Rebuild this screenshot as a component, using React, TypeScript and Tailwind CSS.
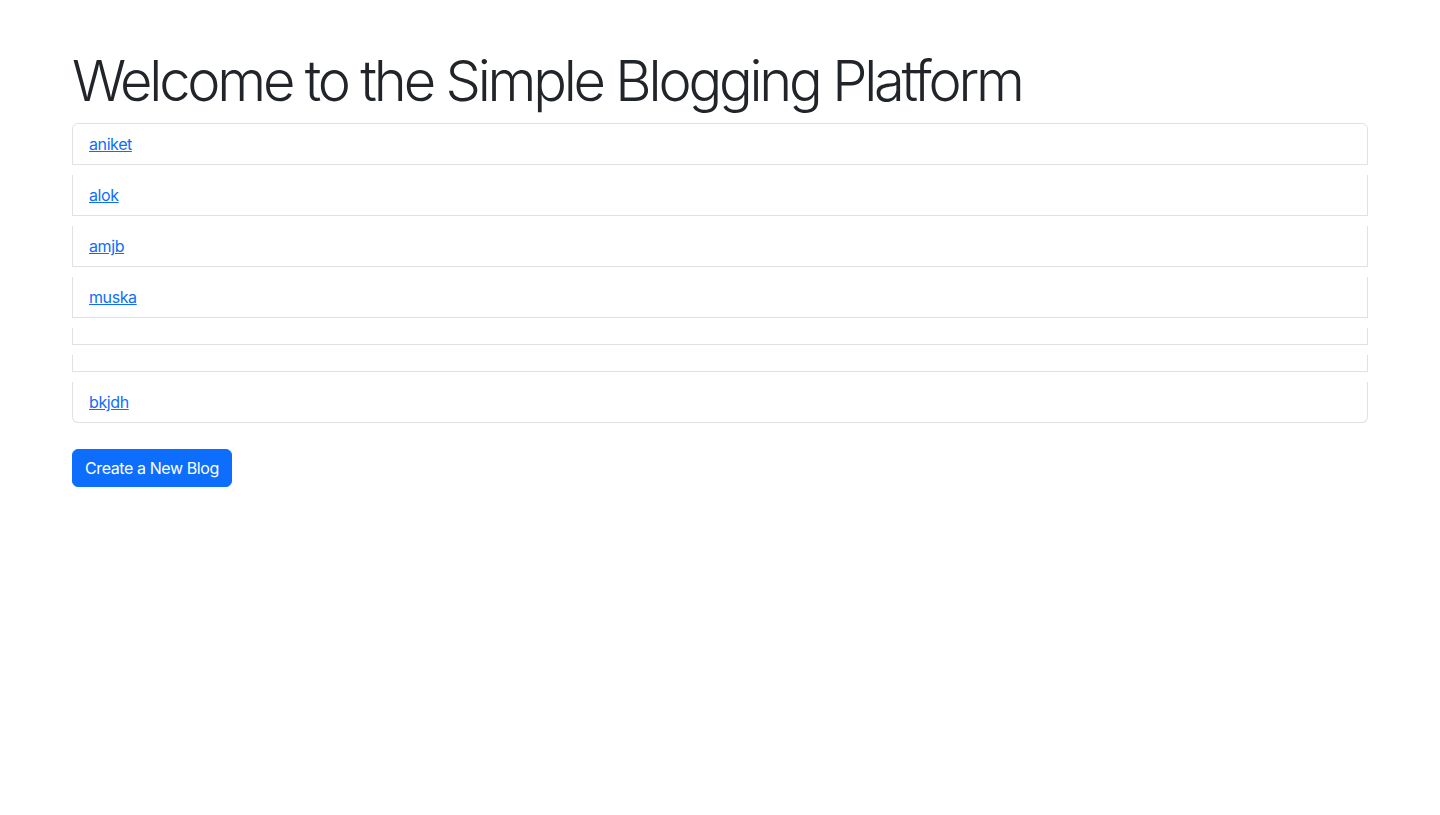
const blogs = ["aniket", "alok", "amjb", "muska", "", "", "bkjdh"];

export default function App() {
  return (
    <div
      className="min-h-screen bg-white text-[#212529]"
      style={{ fontFamily: "Inter, 'Liberation Sans', sans-serif" }}
    >
      <div className="mx-auto w-[1296px] pt-[48px]">
        <h1 className="mb-[8px] text-[56px] font-light leading-[1.2] tracking-[-3.2px]">
          Welcome to the Simple Blogging Platform
        </h1>

        {/* Blog list */}
        <ul className="flex flex-col">
          {blogs.map((name, i) => (
            <li
              key={i}
              className={
                "mb-[10px] border border-[#dee2e6] bg-white px-4 py-2 text-base leading-6 tracking-[-0.4px] " +
                (i === 0 ? "rounded-t-[6px] " : "border-t-0 ") +
                (i === blogs.length - 1 ? "rounded-b-[6px]" : "")
              }
            >
              {name && (
                <a href="#" className="text-[#0d6efd] underline">
                  {name}
                </a>
              )}
            </li>
          ))}
        </ul>

        <button className="mt-4 rounded-[6px] border border-[#0d6efd] bg-[#0d6efd] px-3 py-[6px] text-base leading-6 tracking-[-0.4px] text-white">
          Create a New Blog
        </button>
      </div>
    </div>
  );
}
